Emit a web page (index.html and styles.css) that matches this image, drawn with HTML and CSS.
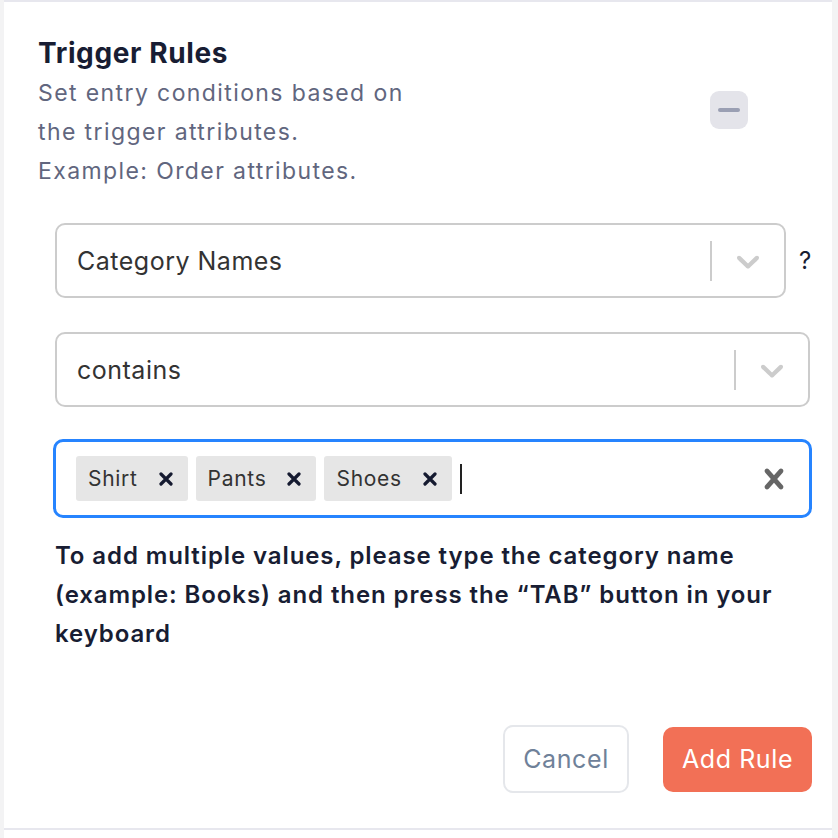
FILE: index.html
```html
<!DOCTYPE html>
<html lang="en">
<head>
<meta charset="utf-8">
<title>Trigger Rules</title>
<link rel="stylesheet" href="styles.css">
</head>
<body>
<div class="frame">
  <section class="card">
    <header class="head">
      <div class="head-text">
        <h2 class="title">Trigger Rules</h2>
        <p class="desc">Set entry conditions based on<br>the trigger attributes.<br>Example: Order attributes.</p>
      </div>
      <button class="collapse" type="button" aria-label="Collapse"><span class="bar"></span></button>
    </header>

    <div class="form">
      <div class="row">
        <div class="select narrow">
          <span class="value">Category Names</span>
          <span class="indicators">
            <span class="sep"></span>
            <svg class="chev" viewBox="0 0 20 20" width="38" height="38"><path d="M4.516 7.548c0.436-0.446 1.043-0.481 1.576 0l3.908 3.747 3.908-3.747c0.533-0.481 1.141-0.446 1.574 0 0.436 0.445 0.408 1.197 0 1.615-0.406 0.418-4.695 4.502-4.695 4.502-0.217 0.223-0.502 0.335-0.787 0.335s-0.57-0.112-0.789-0.335c0 0-4.287-4.084-4.695-4.502s-0.436-1.170 0-1.615z"/></svg>
          </span>
        </div>
        <span class="help">?</span>
      </div>

      <div class="select">
        <span class="value">contains</span>
        <span class="indicators">
          <span class="sep"></span>
          <svg class="chev" viewBox="0 0 20 20" width="38" height="38"><path d="M4.516 7.548c0.436-0.446 1.043-0.481 1.576 0l3.908 3.747 3.908-3.747c0.533-0.481 1.141-0.446 1.574 0 0.436 0.445 0.408 1.197 0 1.615-0.406 0.418-4.695 4.502-4.695 4.502-0.217 0.223-0.502 0.335-0.787 0.335s-0.57-0.112-0.789-0.335c0 0-4.287-4.084-4.695-4.502s-0.436-1.170 0-1.615z"/></svg>
        </span>
      </div>

      <div class="tags-input">
        <div class="tags">
          <span class="tag"><span class="tag-label">Shirt</span><svg class="tag-x" viewBox="0 0 14 14" width="14" height="14"><path d="M2 2L12 12M12 2L2 12"/></svg></span>
          <span class="tag"><span class="tag-label">Pants</span><svg class="tag-x" viewBox="0 0 14 14" width="14" height="14"><path d="M2 2L12 12M12 2L2 12"/></svg></span>
          <span class="tag"><span class="tag-label">Shoes</span><svg class="tag-x" viewBox="0 0 14 14" width="14" height="14"><path d="M2 2L12 12M12 2L2 12"/></svg></span>
          <span class="caret"></span>
        </div>
        <svg class="clear" viewBox="0 0 20 20" width="40" height="40"><path d="M14.348 14.849c-0.469 0.469-1.229 0.469-1.697 0l-2.651-3.030-2.651 3.029c-0.469 0.469-1.229 0.469-1.697 0-0.469-0.469-0.469-1.229 0-1.697l2.758-3.150-2.759-3.152c-0.469-0.469-0.469-1.228 0-1.697s1.228-0.469 1.697 0l2.652 3.031 2.651-3.031c0.469-0.469 1.228-0.469 1.697 0s0.469 1.229 0 1.697l-2.758 3.152 2.758 3.150c0.469 0.469 0.469 1.229 0 1.698z"/></svg>
      </div>

      <p class="hint">To add multiple values, please type the category name (example: Books) and then press the “TAB” button in your keyboard</p>
    </div>

    <footer class="actions">
      <button class="btn cancel" type="button">Cancel</button>
      <button class="btn primary" type="button">Add Rule</button>
    </footer>
  </section>
</div>
</body>
</html>
```

FILE: styles.css
```css
* { box-sizing: border-box; }

html, body {
  margin: 0;
  padding: 0;
  background: #ffffff;
}

body {
  font-family: Inter, "Noto Sans", "Liberation Sans", sans-serif;
  width: 838px;
  height: 838px;
  overflow: hidden;
}

.frame {
  height: 838px;
  border-left: 4px solid #f3f3f4;
  border-right: 6px solid #f3f3f4;
}

.card {
  height: 830px;
  border-top: 2px solid #e7e7ee;
  border-bottom: 2px solid #e7e7ee;
  padding: 34px 20px 0 34px;
  display: flex;
  flex-direction: column;
}

.head {
  display: flex;
  align-items: flex-start;
}

.head-text {
  width: 420px;
}

.title {
  margin: 0;
  font-size: 28px;
  line-height: 34px;
  font-weight: 700;
  letter-spacing: 0.6px;
  color: #181d33;
}

.desc {
  margin: 4px 0 0 0;
  font-size: 23px;
  line-height: 39px;
  letter-spacing: 1.4px;
  color: #61667e;
}

.collapse {
  margin: 55px 0 0 252px;
  width: 38px;
  height: 38px;
  border: 0;
  border-radius: 9px;
  background: #e4e4ea;
  display: flex;
  align-items: center;
  justify-content: center;
  padding: 0;
}

.collapse .bar {
  width: 22px;
  height: 4px;
  border-radius: 2px;
  background: #9a9fb3;
}

.form {
  margin: 32px 0 0 17px;
  display: flex;
  flex-direction: column;
}

.row {
  display: flex;
  align-items: center;
}

.select {
  height: 75px;
  border: 2px solid #cccccc;
  border-radius: 10px;
  display: flex;
  align-items: center;
  justify-content: space-between;
  padding-left: 20px;
  background: #fff;
}

.select.narrow {
  width: 731px;
}

.form > .select {
  margin-top: 34px;
  width: 755px;
}

.value {
  font-size: 25px;
  letter-spacing: 0.5px;
  color: #333333;
}

.indicators {
  display: flex;
  align-items: center;
  height: 100%;
}

.sep {
  width: 2px;
  height: 40px;
  background: #cccccc;
}

.chev {
  fill: #cccccc;
  margin: 0 17px 0 17px;
}

.help {
  margin-left: 13px;
  font-size: 24px;
  color: #181d33;
}

.tags-input {
  margin-top: 32px;
  margin-left: -2px;
  width: 759px;
  height: 79px;
  border: 3px solid #2684ff;
  border-radius: 10px;
  display: flex;
  align-items: center;
  justify-content: space-between;
  padding: 0 15px 0 20px;
}

.tags {
  display: flex;
  align-items: center;
  gap: 8px;
}

.tag {
  height: 45px;
  background: #e6e6e6;
  border-radius: 3px;
  display: flex;
  align-items: center;
  padding: 0 15px 0 12px;
}

.tag-label {
  font-size: 21px;
  letter-spacing: 0.7px;
  color: #333333;
}

.tag-x {
  margin-left: 21px;
  stroke: #151a30;
  stroke-width: 3.2;
  stroke-linecap: round;
  fill: none;
}

.caret {
  margin-left: 0;
  width: 2px;
  height: 30px;
  background: #222;
}

.clear {
  fill: #666666;
}

.hint {
  margin: 18px 0 0 0;
  font-size: 24px;
  line-height: 39px;
  font-weight: 600;
  letter-spacing: 0.9px;
  color: #181d33;
}

.actions {
  margin-top: 72px;
  display: flex;
  justify-content: flex-end;
  align-items: center;
  gap: 34px;
}

.btn {
  font-family: inherit;
  font-size: 25px;
  letter-spacing: 0.6px;
  border-radius: 10px;
  cursor: pointer;
}

.cancel {
  width: 126px;
  height: 68px;
  background: #fff;
  border: 2px solid #e5e7eb;
  color: #6f8199;
}

.primary {
  width: 149px;
  height: 65px;
  background: #f27056;
  border: 0;
  color: #ffffff;
}
```
